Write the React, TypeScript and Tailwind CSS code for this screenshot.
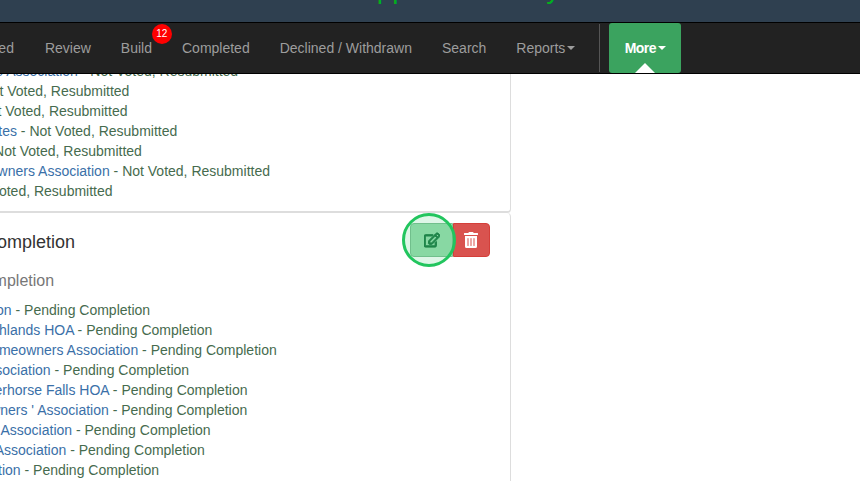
import { FaRegEdit, FaTrashAlt } from "react-icons/fa"

const navItems = [
  { label: "Approved", cut: "-ml-[46px]", gap: "mr-[31px]" },
  { label: "Review", cut: "", gap: "mr-[30px]" },
  { label: "Build", cut: "", gap: "mr-[30px]" },
  { label: "Completed", cut: "", gap: "mr-[30px]" },
  { label: "Declined / Withdrawn", cut: "", gap: "mr-[30px]" },
  { label: "Search", cut: "", gap: "mr-[30px]" },
]

const upper = [
  { name: "Hillside Association", status: "Not Voted, Resubmitted", cut: "-ml-[42px]" },
  { name: "Pine Estates HOA", status: "Not Voted, Resubmitted", cut: "-ml-[143px]" },
  { name: "Oak Grove HOA", status: "Not Voted, Resubmitted", cut: "-ml-[134px]" },
  { name: "Lake Estates", status: "Not Voted, Resubmitted", cut: "-ml-[64px]" },
  { name: "Maple HOA", status: "Not Voted, Resubmitted", cut: "-ml-[90px]" },
  { name: "Sunset Homeowners Association", status: "Not Voted, Resubmitted", cut: "-ml-[95px]" },
  { name: "Park HOA", status: "Not Voted, Resubmitted", cut: "-ml-[110px]" },
]

const lower = [
  { name: "Association", status: "Pending Completion", cut: "-ml-[60px]" },
  { name: "Highlands HOA", status: "Pending Completion", cut: "-ml-[22px]" },
  { name: "Homeowners Association", status: "Pending Completion", cut: "-ml-[19px]" },
  { name: "Association", status: "Pending Completion", cut: "-ml-[21px]" },
  { name: "Silverhorse Falls HOA", status: "Pending Completion", cut: "-ml-[28px]" },
  { name: "Homeowners ' Association", status: "Pending Completion", cut: "-ml-[55px]" },
  { name: "Lakes Association", status: "Pending Completion", cut: "-ml-[40px]" },
  { name: "Ridge Association", status: "Pending Completion", cut: "-ml-[45px]" },
  { name: "Association", status: "Pending Completion", cut: "-ml-[51px]" },
]

function StatusLine({ name, status, cut }: { name: string; status: string; cut: string }) {
  return (
    <div className={`${cut} h-5 whitespace-nowrap`}>
      <span className="text-[#3a70a8]">{name}</span>
      <span className="text-[#466b4e]"> - {status}</span>
    </div>
  )
}

export default function App() {
  return (
    <div className="w-[860px] h-[481px] overflow-hidden bg-white font-['Liberation_Sans',Arial,sans-serif] text-[14px] leading-5">
      <div className="h-[23px] bg-[#2f4050] overflow-hidden border-b border-black">
        <div className="text-[#00b01e] text-[28px] leading-none -mt-[25px] ml-[358px] whitespace-nowrap">Application Only</div>
      </div>

      <nav className="relative z-10 h-[51px] bg-[#222222] border-b border-black flex items-center overflow-hidden text-[#9d9d9d] whitespace-nowrap">
        {navItems.map((item) => (
          <div key={item.label} className={`${item.cut} ${item.gap} relative`}>
            {item.label}
            {item.label === "Build" && (
              <span className="absolute -top-[14px] left-[31px] w-5 h-5 rounded-full bg-[#ff0000] text-white text-[10px] leading-5 text-center">12</span>
            )}
          </div>
        ))}
        <div className="flex items-center">
          Reports
          <span className="ml-[2px] border-x-4 border-t-4 border-x-transparent border-t-[#9d9d9d]"></span>
        </div>
        <div className="ml-6 mr-[9px] w-px h-[48px] bg-[#555555]"></div>
        <div className="relative h-[50px] w-[72px] rounded-[3px] bg-[#3ba35f] text-white font-bold flex items-center justify-center">
          <span className="tracking-[-0.5px]">More</span>
          <span className="ml-[2px] border-x-4 border-t-4 border-x-transparent border-t-white"></span>
          <span className="absolute bottom-0 left-[26px] border-x-[10px] border-b-[10px] border-x-transparent border-b-white"></span>
        </div>
      </nav>

      <div className="w-[511px] overflow-hidden">
        <div className="h-[152px] border-r border-b-2 border-[#dddddd] rounded-br-[4px] -mt-[13px]">
          {upper.map((line) => (
            <StatusLine key={line.name} {...line} />
          ))}
        </div>
        <div className="border-r border-[#dddddd] h-[270px] rounded-tr-[4px]">
          <div className="flex justify-between items-start pt-[10px] pr-5 h-[57px]">
            <div className="-ml-[87px] mt-[6px] text-[18px] leading-[26px] text-[#333333] whitespace-nowrap">Pending Completion</div>
            <div className="flex relative">
              <div className="relative w-[43px] h-[34px] rounded-l-[4px] bg-[#9adcb0] border border-[#7fbf95] flex items-center justify-center">
                <FaRegEdit className="w-4 h-4 text-[#1f7a46]" stroke="currentColor" strokeWidth={36} />
                <span className="absolute -left-[9px] -top-[11px] w-[54px] h-[54px] rounded-full border-[3px] border-[#22c55e] bg-[#22c55e]/15"></span>
              </div>
              <div className="w-[37px] h-[34px] rounded-r-[4px] bg-[#d9534f] border border-[#d43f3a] flex items-center justify-center pr-[2px]">
                <FaTrashAlt className="w-4 h-4 text-white" />
              </div>
            </div>
          </div>
          <div className="-ml-[90px] text-[16px] leading-[22px] text-[#777777] whitespace-nowrap mb-[8px]">Pending Completion</div>
          {lower.map((line, i) => (
            <StatusLine key={i} {...line} />
          ))}
        </div>
      </div>
    </div>
  )
}
